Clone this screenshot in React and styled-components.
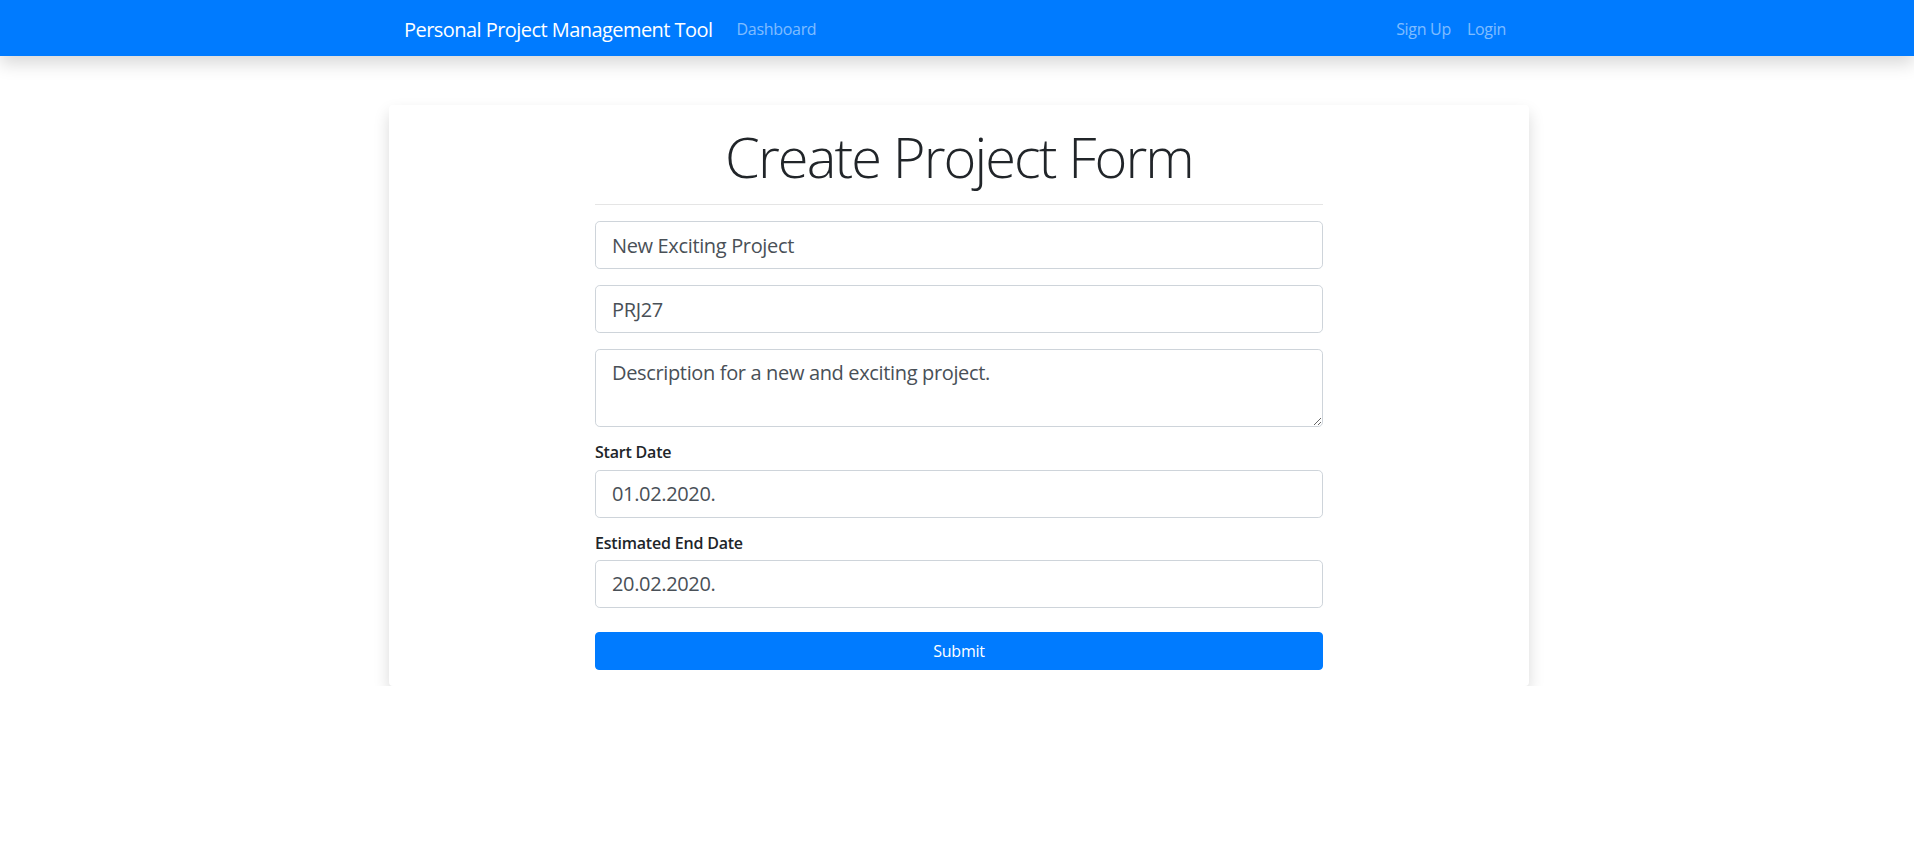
import React from "react";
import styled, { createGlobalStyle } from "styled-components";

const GlobalStyle = createGlobalStyle`
  * { box-sizing: border-box; }
  body {
    margin: 0;
    background: #fff;
    font-family: "Open Sans", "Noto Sans", "Liberation Sans", sans-serif;
    color: #212529;
  }
`;

const Navbar = styled.nav`
  height: 56px;
  background: #007bff;
  box-shadow: 0 0.5rem 1rem rgba(0, 0, 0, 0.15);
`;

const NavContainer = styled.div`
  width: 1140px;
  height: 100%;
  margin-left: calc(50% - 568px);
  padding: 2px 15px 0;
  display: flex;
  align-items: center;
`;

const Brand = styled.a`
  font-size: 20px;
  color: #fff;
  margin-right: 16px;
  text-decoration: none;
  letter-spacing: -0.55px;
`;

const NavLink = styled.a`
  font-size: 16px;
  padding: 8px;
  color: rgba(255, 255, 255, 0.5);
  text-decoration: none;
  letter-spacing: -0.3px;
`;

const Spacer = styled.div`
  flex: 1;
`;

const Container = styled.main`
  width: 1140px;
  margin: 49px 0 0 calc(50% - 568px);
`;

const Card = styled.div`
  background: #fff;
  border-radius: 4px;
  box-shadow: 0 0.5rem 1rem rgba(0, 0, 0, 0.15);
  padding: 18px 0 16px;
`;

const FormCol = styled.form`
  width: 728px;
  margin: 0 auto;
  display: flex;
  flex-direction: column;
`;

const Title = styled.h1`
  margin: 0;
  font-size: 56px;
  font-weight: 300;
  line-height: 1.2;
  text-align: center;
  letter-spacing: -1.9px;
  color: #212529;
`;

const Divider = styled.hr`
  width: 100%;
  margin: 14px 0 16px;
  border: 0;
  border-top: 1px solid rgba(0, 0, 0, 0.1);
`;

const Field = styled.div`
  display: flex;
  flex-direction: column;
  margin-bottom: 16px;
`;

const Label = styled.label`
  font-size: 16px;
  font-weight: 600;
  line-height: 1.15;
  margin-bottom: 8px;
  letter-spacing: -0.2px;
  color: #212529;
`;

const controlStyles = `
  width: 100%;
  font-family: inherit;
  font-size: 20px;
  line-height: 1.5;
  padding: 8px 16px;
  color: #495057;
  background: #fff;
  border: 1px solid #ced4da;
  border-radius: 4.8px;
  outline: none;
  letter-spacing: -0.35px;
`;

const Input = styled.input`
  ${controlStyles}
  height: 48px;
`;

const TextArea = styled.textarea`
  ${controlStyles}
  height: 78px;
  resize: vertical;
`;

const SubmitButton = styled.button`
  margin-top: 8px;
  width: 100%;
  height: 38px;
  font-family: inherit;
  font-size: 16px;
  line-height: 1.5;
  color: #fff;
  background: #007bff;
  border: 1px solid #007bff;
  border-radius: 4px;
  cursor: pointer;
  letter-spacing: -0.2px;
`;

export default function App() {
  return (
    <>
      <GlobalStyle />
      <Navbar>
        <NavContainer>
          <Brand href="#">Personal Project Management Tool</Brand>
          <NavLink href="#">Dashboard</NavLink>
          <Spacer />
          <NavLink href="#">Sign Up</NavLink>
          <NavLink href="#">Login</NavLink>
        </NavContainer>
      </Navbar>
      <Container>
        <Card>
          <FormCol onSubmit={(e) => e.preventDefault()}>
            <Title>Create Project Form</Title>
            <Divider />
            <Field>
              <Input type="text" defaultValue="New Exciting Project" />
            </Field>
            <Field>
              <Input type="text" defaultValue="PRJ27" />
            </Field>
            <Field>
              <TextArea defaultValue="Description for a new and exciting project." />
            </Field>
            <Field>
              <Label>Start Date</Label>
              <Input type="text" defaultValue="01.02.2020." />
            </Field>
            <Field>
              <Label>Estimated End Date</Label>
              <Input type="text" defaultValue="20.02.2020." />
            </Field>
            <SubmitButton type="submit">Submit</SubmitButton>
          </FormCol>
        </Card>
      </Container>
    </>
  );
}
